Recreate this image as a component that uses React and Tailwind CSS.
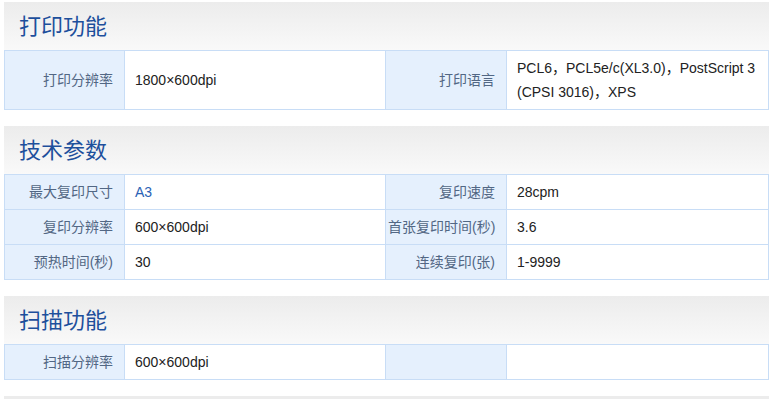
import React from 'react';

const sections = [
  {
    title: '打印功能',
    rows: [
      ['打印分辨率', '1800×600dpi', '打印语言', 'PCL6，PCL5e/c(XL3.0)，PostScript 3 (CPSI 3016)，XPS'],
    ],
  },
  {
    title: '技术参数',
    rows: [
      ['最大复印尺寸', 'A3', '复印速度', '28cpm'],
      ['复印分辨率', '600×600dpi', '首张复印时间(秒)', '3.6'],
      ['预热时间(秒)', '30', '连续复印(张)', '1-9999'],
    ],
  },
  {
    title: '扫描功能',
    rows: [['扫描分辨率', '600×600dpi', '', '']],
  },
];

const Label = ({ children }) => (
  <td className="whitespace-nowrap border border-[#c8ddf6] bg-[#e5f0fd] pl-[2px] pr-[11px] py-[5px] text-right align-middle text-[14px] leading-[24px] text-[#526784]">
    {children}
  </td>
);

const Value = ({ children, link }) => (
  <td
    className={`border border-[#c8ddf6] bg-white pl-[10px] pr-[8px] py-[5px] align-middle text-[14px] leading-[24px] ${
      link ? 'text-[#2a62b5]' : 'text-[#222]'
    }`}
  >
    {children}
  </td>
);

const Section = ({ title, rows }) => (
  <div className="mb-[16px]">
    <div className="flex h-[48px] items-center bg-gradient-to-b from-[#ececec] to-[#f9f9f9] pl-[15px]">
      <h2 className="text-[22px] font-normal text-[#1d4f9c]">{title}</h2>
    </div>
    <table className="w-full table-fixed border-collapse">
      <colgroup>
        <col className="w-[120px]" />
        <col className="w-[261px]" />
        <col className="w-[121px]" />
        <col />
      </colgroup>
      <tbody>
        {rows.map((r, i) => (
          <tr key={i} className="h-[35px]">
            <Label>{r[0]}</Label>
            <Value link={r[1] === 'A3'}>{r[1]}</Value>
            <Label>{r[2]}</Label>
            <Value>{r[3]}</Value>
          </tr>
        ))}
      </tbody>
    </table>
  </div>
);

export default function App() {
  return (
    <div
      className="h-[399px] overflow-hidden bg-white px-[4px] pt-[2px] pr-[11px]"
      style={{ fontFamily: '"Liberation Sans", Arial, "Noto Sans CJK SC", sans-serif' }}
    >
      {sections.map((s) => (
        <Section key={s.title} {...s} />
      ))}
      <div className="h-[3px] bg-[#ececec]" />
    </div>
  );
}
